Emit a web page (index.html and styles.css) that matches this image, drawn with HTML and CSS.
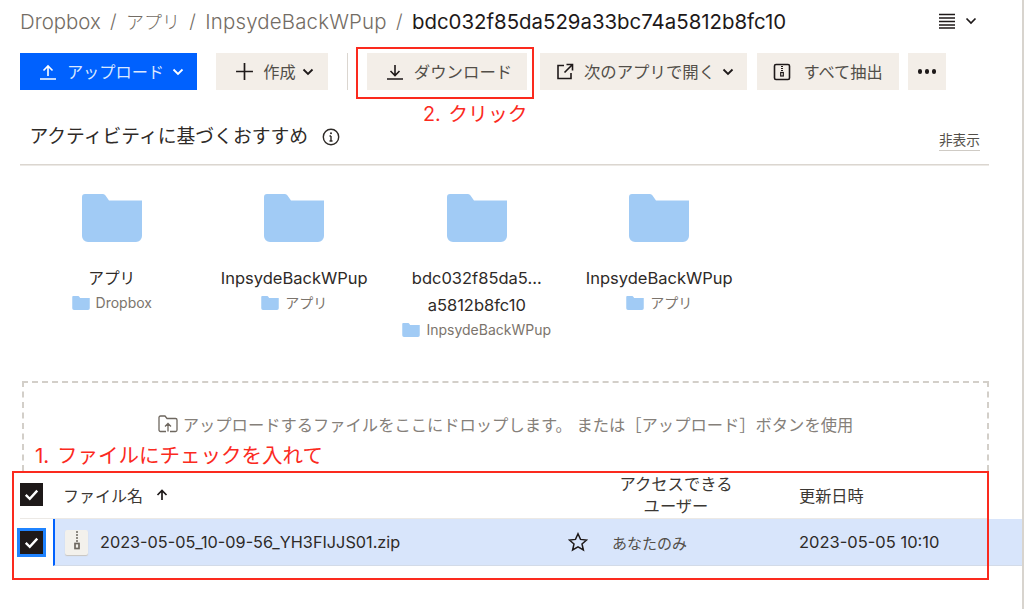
FILE: index.html
```html
<!DOCTYPE html>
<html lang="ja">
<head>
<meta charset="utf-8">
<title>Dropbox</title>
<link rel="stylesheet" href="styles.css">
</head>
<body>
<div class="page">
  <header class="crumbs">
    <nav class="path">
      <span class="crumb">Dropbox</span><span class="sep">/</span>
      <span class="crumb ja">アプリ</span><span class="sep">/</span>
      <span class="crumb wide">InpsydeBackWPup</span><span class="sep">/</span>
      <span class="current">bdc032f85da529a33bc74a5812b8fc10</span>
    </nav>
    <div class="view">
      <svg class="ico-list" viewBox="0 0 16 16"><path d="M0 1.500h16M0 5h16M0 8.500h16M0 12h16M0 15h16"/></svg>
      <svg class="chev" viewBox="0 0 12 8"><path d="M1.500 1.500 6 6l4.500-4.500"/></svg>
    </div>
  </header>

  <div class="toolbar">
    <button class="btn primary w-upload">
      <svg class="ico" viewBox="0 0 18 18"><path d="M1 16h16M9 13V3M4.500 7.500 9 3l4.500 4.500"/></svg>
      <span>アップロード</span>
      <svg class="chev" viewBox="0 0 12 8"><path d="M1.500 1.500 6 6l4.500-4.500"/></svg>
    </button>
    <button class="btn w-create">
      <svg class="ico plus" viewBox="0 0 18 18"><path d="M1 9h16M9 1v16"/></svg>
      <span>作成</span>
      <svg class="chev" viewBox="0 0 12 8"><path d="M1.500 1.500 6 6l4.500-4.500"/></svg>
    </button>
    <div class="divider"></div>
    <button class="btn w-download">
      <svg class="ico" viewBox="0 0 18 18"><path d="M1 16h16M9 2v10M4.500 8 9 12.500 13.500 8"/></svg>
      <span>ダウンロード</span>
    </button>
    <button class="btn w-open">
      <svg class="ico" viewBox="0 0 18 18"><path d="M8 2.500H2v13h13V10M10.500 1.500h6v6M16 2 8.500 9.500"/></svg>
      <span>次のアプリで開く</span>
      <svg class="chev" viewBox="0 0 12 8"><path d="M1.500 1.500 6 6l4.500-4.500"/></svg>
    </button>
    <button class="btn w-extract">
      <svg class="ico" viewBox="0 0 18 18"><rect x="1.500" y="1.500" width="15" height="15" rx="1.500"/><path class="zip" d="M8 3.500h2M8 5.500h2M8 7.500h2"/><rect class="zipbox" x="7.700" y="9.500" width="2.600" height="3.500"/></svg>
      <span>すべて抽出</span>
    </button>
    <button class="btn w-more" aria-label="その他">
      <span class="dots"><i></i><i></i><i></i></span>
    </button>
  </div>

  <section class="suggest-head">
    <h2>アクティビティに基づくおすすめ
      <svg class="info" viewBox="0 0 18 18"><circle cx="9" cy="9" r="7.700"/><path d="M9 8v5M7.500 13h3M7.500 8H9"/><circle class="dot" cx="9" cy="5.300" r="1"/></svg>
    </h2>
    <span class="hide">非表示</span>
  </section>

  <section class="folders">
    <article class="tile">
      <svg class="folder" viewBox="0 0 60 48"><path d="M0 3a3 3 0 0 1 3-3h18a3 3 0 0 1 2.500 1.500L27 6.500h33V42a6 6 0 0 1-6 6H6a6 6 0 0 1-6-6z"/></svg>
      <div class="name ja">アプリ</div>
      <div class="parent"><svg class="mini" viewBox="0 0 60 48"><path d="M0 3a3 3 0 0 1 3-3h18a3 3 0 0 1 2.500 1.500L27 6.500h33V42a6 6 0 0 1-6 6H6a6 6 0 0 1-6-6z"/></svg>Dropbox</div>
    </article>
    <article class="tile">
      <svg class="folder" viewBox="0 0 60 48"><path d="M0 3a3 3 0 0 1 3-3h18a3 3 0 0 1 2.500 1.500L27 6.500h33V42a6 6 0 0 1-6 6H6a6 6 0 0 1-6-6z"/></svg>
      <div class="name">InpsydeBackWPup</div>
      <div class="parent"><svg class="mini" viewBox="0 0 60 48"><path d="M0 3a3 3 0 0 1 3-3h18a3 3 0 0 1 2.500 1.500L27 6.500h33V42a6 6 0 0 1-6 6H6a6 6 0 0 1-6-6z"/></svg>アプリ</div>
    </article>
    <article class="tile">
      <svg class="folder" viewBox="0 0 60 48"><path d="M0 3a3 3 0 0 1 3-3h18a3 3 0 0 1 2.500 1.500L27 6.500h33V42a6 6 0 0 1-6 6H6a6 6 0 0 1-6-6z"/></svg>
      <div class="name">bdc032f85da5...<br>a5812b8fc10</div>
      <div class="parent"><svg class="mini" viewBox="0 0 60 48"><path d="M0 3a3 3 0 0 1 3-3h18a3 3 0 0 1 2.500 1.500L27 6.500h33V42a6 6 0 0 1-6 6H6a6 6 0 0 1-6-6z"/></svg>InpsydeBackWPup</div>
    </article>
    <article class="tile">
      <svg class="folder" viewBox="0 0 60 48"><path d="M0 3a3 3 0 0 1 3-3h18a3 3 0 0 1 2.500 1.500L27 6.500h33V42a6 6 0 0 1-6 6H6a6 6 0 0 1-6-6z"/></svg>
      <div class="name">InpsydeBackWPup</div>
      <div class="parent"><svg class="mini" viewBox="0 0 60 48"><path d="M0 3a3 3 0 0 1 3-3h18a3 3 0 0 1 2.500 1.500L27 6.500h33V42a6 6 0 0 1-6 6H6a6 6 0 0 1-6-6z"/></svg>アプリ</div>
    </article>
  </section>

  <section class="dropzone">
    <svg class="ico-drop" viewBox="0 0 20 18"><path d="M8 16.500H2.500a1.500 1.500 0 0 1-1.500-1.500V2.500A1.500 1.500 0 0 1 2.500 1H7l2 2.500h8.500A1.500 1.500 0 0 1 19 5v10a1.500 1.500 0 0 1-1.500 1.500H12M10 16.500V9M7 11.500 10 8.500l3 3"/></svg>
    <span>アップロードするファイルをここにドロップします。 または［アップロード］ボタンを使用</span>
  </section>

  <section class="table">
    <div class="thead">
      <span class="check"><svg viewBox="0 0 24 24"><path d="M6 12.500 10.200 16.500 18 8"/></svg></span>
      <span class="th-name">ファイル名<svg class="arrow" viewBox="0 0 12 12"><path d="M6 11V1.500M1.500 6 6 1.500 10.500 6"/></svg></span>
      <span class="th-access">アクセスできる<br>ユーザー</span>
      <span class="th-date">更新日時</span>
    </div>
    <div class="tbody">
      <span class="check focused"><svg viewBox="0 0 24 24"><path d="M6 12.500 10.200 16.500 18 8"/></svg></span>
      <div class="row">
        <span class="zipfile"><svg viewBox="0 0 22 24"><path d="M10 2h2M10 5h2M10 8h2M10 11h2"/><rect x="9" y="13.500" width="4" height="5"/></svg></span>
        <span class="filename">2023-05-05_10-09-56_YH3FIJJS01.zip</span>
        <svg class="star" viewBox="0 0 20 20"><path d="M10 1.800 12.500 7.400 18.600 8 14 12 15.400 18 10 14.900 4.600 18 6 12 1.400 8 7.500 7.400z"/></svg>
        <span class="who">あなたのみ</span>
        <span class="date">2023-05-05 10:10</span>
      </div>
    </div>
  </section>
</div>

<div class="mark mark-download"></div>
<div class="note note-click">2. クリック</div>
<div class="note note-check">1. ファイルにチェックを入れて</div>
<div class="mark mark-table"></div>
</body>
</html>
```

FILE: styles.css
```css
* { box-sizing: border-box; }
html, body { margin: 0; padding: 0; background: #fff; }
body {
  position: relative;
  width: 1024px;
  height: 609px;
  overflow: hidden;
  font-family: "Inter", "Noto Sans CJK JP", sans-serif;
  color: #1e1919;
}
.page { width: 1024px; height: 609px; border-right: 2px solid #d8d4ce; padding-left: 20px; }

svg { fill: none; stroke: currentColor; display: block; flex: none; }

.crumbs { height: 53px; display: flex; align-items: center; padding: 0 45px 11px 0; justify-content: space-between; }
.path { display: flex; align-items: center; font-size: 20.400px; white-space: nowrap; color: #736c64; font-weight: 300; }
.path .ja { font-size: 18px; }
.path .wide { letter-spacing: .2px; }
.sep { margin: 0 9.300px; font-size: 19px; }
.current { color: #1e1919; font-weight: 400; }
.view { display: flex; align-items: center; gap: 10px; }
.ico-list { width: 16px; height: 16px; stroke-width: 1.300; }
.view .chev { width: 12px; height: 8px; stroke-width: 1.700; }

.toolbar { display: flex; height: 37px; align-items: stretch; }
.btn {
  border: 0; height: 37px; padding: 0; display: flex; align-items: center; justify-content: center;
  background: #f3eee8; color: #524e48; font: 400 16.200px "Inter", "Noto Sans CJK JP", sans-serif;
}
.btn > span { margin-top: -2px; }
.btn .ico { width: 18px; height: 18px; stroke-width: 1.600; color: #1e1919; }
.btn .plus { width: 19px; height: 19px; }
.btn .chev { width: 12px; height: 8px; stroke-width: 1.800; color: #1e1919; }
.primary { background: #0061fe; color: #dbe8ff; }
.primary .ico, .primary .chev { color: #fff; }
.w-upload { width: 177px; gap: 10px; margin-right: 19px; padding-left: 6px; }
.w-upload .chev { margin-left: -2px; }
.w-create { width: 112px; gap: 9px; margin-right: 19px; padding-left: 5px; }
.w-create .chev { margin-left: -3px; }
.divider { width: 1px; background: #dbd6d0; margin-right: 19px; }
.w-download { width: 160px; gap: 10px; margin-right: 13px; padding-left: 4px; font-size: 16.400px; }
.w-open { width: 207px; gap: 10px; margin-right: 10px; padding-left: 3px; font-size: 16.400px; }
.w-open .chev { margin-left: -3px; }
.w-extract { width: 142px; gap: 12px; margin-right: 9px; }
.w-more { width: 38px; }
.w-more > span { margin-top: 0; }
.dots { display: flex; gap: 2.500px; }
.dots i { width: 4.500px; height: 4.500px; background: #1e1919; border-radius: 50%; }
.zip { stroke-width: 1.200; }
.zipbox { stroke-width: 1.200; }

.suggest-head {
  width: 969px; height: 75px; display: flex; align-items: flex-end; justify-content: space-between;
  border-bottom: 1px solid #dbd6d0; box-shadow: 0 1px 0 #ece9e5; padding: 0 0 14px 9.500px;
}
.suggest-head h2 { margin: 0; display: flex; align-items: center; gap: 14px; font-size: 18.800px; font-weight: 400; line-height: 26px; color: #2e2a27; }
.info { width: 18px; height: 18px; stroke-width: 1.400; }
.dot { fill: currentColor; stroke: none; }
.hide { font-size: 13.700px; color: #524e48; border-bottom: 1px solid #cfcbc5; line-height: 19px; margin-right: 9px; margin-bottom: -1px; }

.folders { display: flex; height: 216px; padding: 29px 0 0 .5px; }
.tile { width: 182.500px; display: flex; flex-direction: column; align-items: center; }
.folder { width: 60px; height: 48px; fill: #a1cbf5; stroke: none; }
.name { margin-top: 23px; font-size: 16.500px; line-height: 27px; text-align: center; color: #2e2a27; white-space: nowrap; }
.name.ja { font-size: 15.700px; }
.parent { margin-top: -2px; display: flex; align-items: center; gap: 6px; font-size: 14px; line-height: 25px; color: #7b746c; white-space: nowrap; }
.mini { width: 18px; height: 14px; fill: #a1cbf5; stroke: none; }

.dropzone {
  width: 967px; height: 90px; margin-left: 2px; border: 2px dashed #d3cfc9; border-bottom: 0;
  display: flex; align-items: center; justify-content: center; gap: 5px;
  padding-bottom: 6px; font-size: 16.300px; color: #85807a; white-space: nowrap;
}
.ico-drop { width: 20px; height: 18px; stroke-width: 1.300; color: #6e675f; }

.table { width: 1002px; }
.thead { width: 969px; height: 48px; display: flex; align-items: center; border-bottom: 1px solid #ece9e5; }
.check { width: 23px; height: 23px; background: #1e1919; color: #fff; display: flex; align-items: center; justify-content: center; flex: none; }
.check svg { width: 23px; height: 23px; stroke-width: 2.500; }
.th-name { margin-left: 20px; width: 554px; display: flex; align-items: center; gap: 13px; font-size: 16px; color: #3b3733; }
.arrow { width: 12px; height: 12px; stroke-width: 1.700; color: #1e1919; }
.th-access { width: 118px; text-align: center; font-size: 16.300px; line-height: 22px; color: #3b3733; white-space: nowrap; }
.th-date { margin-left: 64px; font-size: 16.200px; color: #3b3733; }

.tbody { display: flex; align-items: center; height: 47px; }
.check.focused { box-shadow: 0 0 0 3px #1f83ff; }
.row {
  margin-left: 10px; flex: 1; height: 47px; background: #d8e5fb; border-left: 2px solid #0061fe;
  border-bottom: 1px solid #d3dbe8; display: flex; align-items: center;
}
.zipfile { margin-left: 10px; width: 23px; height: 25px; background: #f3f1ec; border-radius: 2px; box-shadow: 0 1px 1px #c9c5bf; color: #6d6860; display: flex; align-items: center; justify-content: center; }
.zipfile svg { width: 22px; height: 24px; stroke-width: 1.700; }
.filename { margin-left: 12px; width: 468px; font-size: 16.250px; color: #2e2a27; white-space: nowrap; }
.star { width: 20px; height: 20px; stroke-width: 1.500; color: #1e1919; }
.who { margin-left: 24px; width: 187px; font-size: 15px; color: #524e48; }
.date { font-size: 16.500px; color: #2e2a27; white-space: nowrap; }

.mark { position: absolute; border: 2.500px solid #fb2a1e; }
.mark-download { left: 356px; top: 47px; width: 178px; height: 52px; }
.mark-table { left: 12px; top: 471px; width: 977px; height: 109px; }
.note { position: absolute; color: #fb2a1e; line-height: 24px; white-space: nowrap; word-spacing: 2px; }
.note-click { left: 423px; top: 102px; font-size: 19.800px; }
.note-check { left: 35px; top: 444px; font-size: 20.500px; }
```
